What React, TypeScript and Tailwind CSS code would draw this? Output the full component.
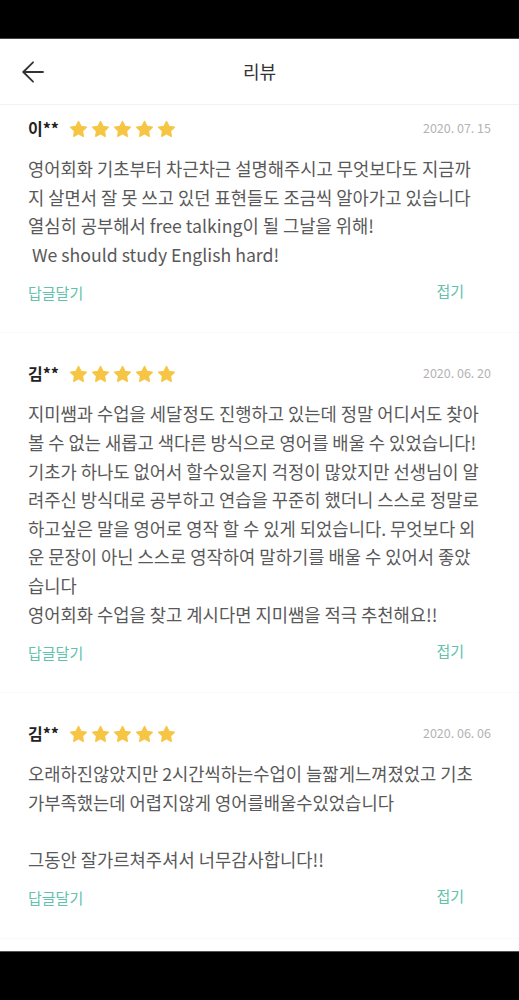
import React from 'react';

interface Review {
  id: number;
  name: string;
  date: string;
  lines: string[];
}

const reviews: Review[] = [
  {
    id: 1,
    name: '이**',
    date: '2020. 07. 15',
    lines: [
      '영어회화 기초부터 차근차근 설명해주시고 무엇보다도 지금까',
      '지 살면서 잘 못 쓰고 있던 표현들도 조금씩 알아가고 있습니다',
      '열심히 공부해서 free talking이 될 그날을 위해!',
      '\u00a0We should study English hard!'
    ]
  },
  {
    id: 2,
    name: '김**',
    date: '2020. 06. 20',
    lines: [
      '지미쌤과 수업을 세달정도 진행하고 있는데 정말 어디서도 찾아',
      '볼 수 없는 새롭고 색다른 방식으로 영어를 배울 수 있었습니다!',
      '기초가 하나도 없어서 할수있을지 걱정이 많았지만 선생님이 알',
      '려주신 방식대로 공부하고 연습을 꾸준히 했더니 스스로 정말로',
      '하고싶은 말을 영어로 영작 할 수 있게 되었습니다. 무엇보다 외',
      '운 문장이 아닌 스스로 영작하여 말하기를 배울 수 있어서 좋았',
      '습니다',
      '영어회화 수업을 찾고 계시다면 지미쌤을 적극 추천해요!!'
    ]
  },
  {
    id: 3,
    name: '김**',
    date: '2020. 06. 06',
    lines: [
      '오래하진않았지만 2시간씩하는수업이 늘짧게느껴졌었고 기초',
      '가부족했는데 어렵지않게 영어를배울수있었습니다',
      '',
      '그동안 잘가르쳐주셔서 너무감사합니다!!'
    ]
  }
];

const Star = () => (
  <svg width="21" height="21" viewBox="0 0 24 24">
    <path
      d="M12 2.8l2.75 5.6 6.15.9-4.45 4.35 1.05 6.1L12 16.85l-5.5 2.9 1.05-6.1L3.1 9.3l6.15-.9z"
      fill="#f6c544"
      stroke="#f6c544"
      strokeWidth="1.6"
      strokeLinejoin="round"
    />
  </svg>
);

const BackArrow = () => (
  <svg width="24" height="24" viewBox="0 0 24 24" fill="none" stroke="#333" strokeWidth="1.8" strokeLinecap="round" strokeLinejoin="round">
    <path d="M22 12H2.5" />
    <path d="M12 2.3L2.3 12l9.7 9.7" />
  </svg>
);

const ReviewItem = ({ review, first }: { review: Review; first: boolean }) => (
  <div className={`${first ? 'pt-[11px]' : 'pt-[28px]'} pb-[29px] border-b border-[#fafafa]`}>
    <div className="flex items-center h-[24px] px-[28px]">
      <span className="text-[16px] font-bold text-[#222]">{review.name}</span>
      <div className="flex items-center gap-[1px] ml-[9px] mt-[3px]">
        {[0, 1, 2, 3, 4].map((i) => (
          <Star key={i} />
        ))}
      </div>
      <span className="ml-auto text-[12.5px] text-[#b3b3b3]">{review.date}</span>
    </div>
    <div className="mt-[14px] px-[28px] text-[17.7px] leading-[28.6px] text-[#595959]">
      {review.lines.map((line, i) => (
        <div key={i} className="whitespace-pre h-[28.6px]">
          {line}
        </div>
      ))}
    </div>
    <div className="mt-[15px] flex items-center justify-between h-[20px] pl-[28px] pr-[55px] text-[15px] text-[#62c2ac]">
      <span>답글달기</span>
      <span className="-mt-[4px]">접기</span>
    </div>
  </div>
);

export default function App() {
  return (
    <div className="w-[519px] h-[1000px] flex flex-col bg-black font-['Noto_Sans_CJK_KR','Noto_Sans',sans-serif]">
      <div className="h-[39px] bg-black border-b border-[#444]" />
      <div className="flex-1 bg-white flex flex-col">
        <div className="relative h-[66px] flex items-center justify-center border-b border-[#f2f2f2]">
          <button className="absolute left-[21px] top-[21px]">
            <BackArrow />
          </button>
          <h1 className="text-[18px] text-[#333]">리뷰</h1>
        </div>
        {reviews.map((review, index) => (
          <ReviewItem key={review.id} review={review} first={index === 0} />
        ))}
      </div>
      <div className="h-[49px] bg-black border-t border-[#555]" />
    </div>
  );
}
